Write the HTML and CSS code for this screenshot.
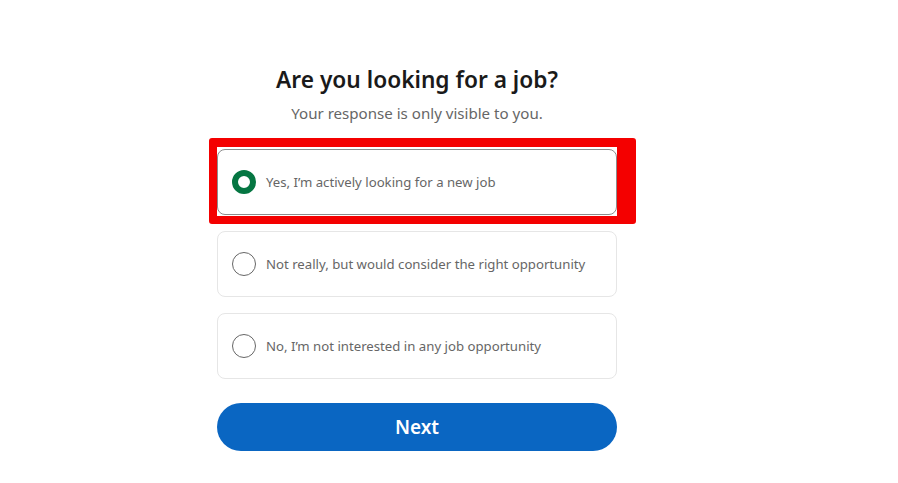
FILE: index.html
```html
<!DOCTYPE html>
<html>
    <head>
        <meta charset="UTF-8">
        <title>Job seeking status</title>
        <link rel="stylesheet" href="styles.css">
    </head>
    <body>
        <div class="survey">
            <h1>Are you looking for a job?</h1>
            <p class="sub">Your response is only visible to you.</p>

            <form class="options">
                <div class="highlight-wrap">
                    <label class="option selected">
                        <span class="radio"></span>
                        Yes, I’m actively looking for a new job
                    </label>
                    <div class="highlight"></div>
                </div>
                <label class="option">
                    <span class="radio"></span>
                    Not really, but would consider the right opportunity
                </label>
                <label class="option">
                    <span class="radio"></span>
                    No, I’m not interested in any job opportunity
                </label>

                <button type="button" class="next">Next</button>
            </form>
        </div>
    </body>
</html>
```

FILE: styles.css
```css
body {
    margin: 0;
    background-color: #fff;
    font-family: "Segoe UI", "Noto Sans", Arial, sans-serif;
}

.survey {
    width: 400px;
    margin-left: 217px;
    padding-top: 62px;
    text-align: center;
}

h1 {
    margin: 0;
    font-size: 22.7px;
    font-weight: 600;
    color: #1a1a1a;
    line-height: 36px;
}

.sub {
    margin: 3px 0 0;
    font-size: 15.1px;
    color: #666;
    line-height: 24px;
}

.options {
    display: flex;
    flex-direction: column;
    gap: 16px;
    margin-top: 24px;
    text-align: left;
}

.highlight-wrap {
    position: relative;
}

/* red annotation box around the chosen answer */
.highlight {
    position: absolute;
    left: -8px;
    top: -11px;
    right: -19px;
    bottom: -9px;
    border: 8px solid #f40000;
    border-width: 9px 19px 8px 8px;
    border-radius: 3px;
    pointer-events: none;
}

.option {
    display: flex;
    align-items: center;
    gap: 10px;
    height: 66px;
    box-sizing: border-box;
    padding: 0 16px 0 14px;
    border: 1px solid #e6e6e6;
    border-radius: 8px;
    font-size: 13.2px;
    color: #666;
}

.option.selected {
    border-color: #8c8c8c;
}

.radio {
    width: 24px;
    height: 24px;
    box-sizing: border-box;
    border: 1px solid #666;
    border-radius: 50%;
    flex-shrink: 0;
}

.selected .radio {
    border: 6px solid #057642;
}

.next {
    height: 48px;
    margin-top: 8px;
    border: none;
    border-radius: 24px;
    background-color: #0a66c2;
    color: #fff;
    font-family: inherit;
    font-size: 19px;
    font-weight: 600;
    cursor: pointer;
}
```
